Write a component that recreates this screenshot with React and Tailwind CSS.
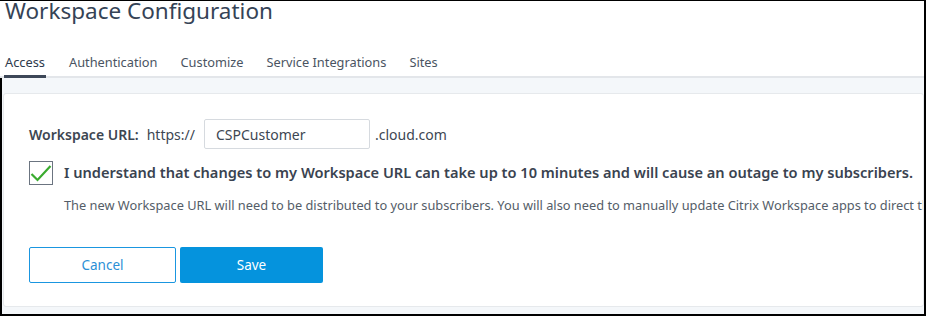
import { useState } from "react";

export default function App() {
  const [agreed, setAgreed] = useState(true);
  const [host, setHost] = useState("CSPCustomer");

  const tabs = ["Access", "Authentication", "Customize", "Service Integrations", "Sites"];

  return (
    <div
      className="w-[926px] h-[316px] overflow-hidden bg-white border-t border-r-2 border-b-2 border-black flex flex-col"
      style={{ fontFamily: '"Noto Sans", "Open Sans", sans-serif' }}
    >
      {/* HEADER */}
      <h1 className="text-[22.5px] leading-[24px] text-[#354356] pl-[5px] -mt-[2px] h-[40px]">
        Workspace Configuration
      </h1>

      {/* TABS */}
      <div className="flex border-b-2 border-[#e3e6ea] pl-[4px] h-[39px]">
        {tabs.map((tab, i) => (
          <div
            key={tab}
            className={
              i === 0
                ? "px-[1px] mr-[18px] pt-[14px] text-[12.8px] text-[#2f3b4c] border-b-[3px] border-[#3d4758] -mb-[2px]"
                : "mx-[5px] mr-[18px] pt-[14px] text-[12.8px] text-[#4a5462]"
            }
          >
            {tab}
          </div>
        ))}
      </div>

      {/* BODY */}
      <div className="flex-1 bg-[#f4f7fa] border-l-2 border-black pt-[15px] pl-[1px] pb-[7px] flex flex-col">
        <div className="flex-1 bg-white border border-[#e6e9ec] rounded-[3px] pl-[25px] pt-[25px] text-[#3d4652] overflow-hidden whitespace-nowrap">
          {/* URL ROW */}
          <div className="flex items-center h-[30px] text-[14px]">
            <span className="font-semibold mr-[8px]">Workspace URL:</span>
            <span className="mr-[9px]">https://</span>
            <input
              value={host}
              onChange={(e) => setHost(e.target.value)}
              className="w-[166px] h-[30px] border border-[#d6dadf] rounded-[2px] px-[11px] text-[14px] text-[#3d4652] outline-none"
            />
            <span className="ml-[5px]">.cloud.com</span>
          </div>

          {/* CHECKBOX */}
          <label className="flex items-center mt-[12px] cursor-pointer">
            <span
              onClick={() => setAgreed(!agreed)}
              className="w-[24px] h-[24px] border border-[#6b7480] bg-white flex items-center justify-center mr-[11px] shrink-0"
            >
              {agreed && (
                <svg width="22" height="18" viewBox="0 0 22 18">
                  <path d="M1.5 10 L7.5 16 L20.5 2" fill="none" stroke="#3aab2f" strokeWidth="2.2" />
                </svg>
              )}
            </span>
            <span className="font-semibold text-[14.6px] text-[#3a4350]">
              I understand that changes to my Workspace URL can take up to 10 minutes and will cause an outage to my subscribers.
            </span>
          </label>

          <p className="pl-[35px] mt-[11px] text-[12.8px] text-[#545d68]">
            The new Workspace URL will need to be distributed to your subscribers. You will also need to manually update Citrix Workspace apps to direct them to the new URL.
          </p>

          {/* BUTTONS */}
          <div className="flex gap-[4px] mt-[32px]">
            <button className="w-[147px] h-[36px] border border-[#1a96e0] rounded-[2px] text-[#2b8fd6] text-[13.5px] bg-white">
              Cancel
            </button>
            <button className="w-[143px] h-[36px] rounded-[2px] bg-[#0593dd] text-white text-[13.5px]">
              Save
            </button>
          </div>
        </div>
      </div>
    </div>
  );
}
